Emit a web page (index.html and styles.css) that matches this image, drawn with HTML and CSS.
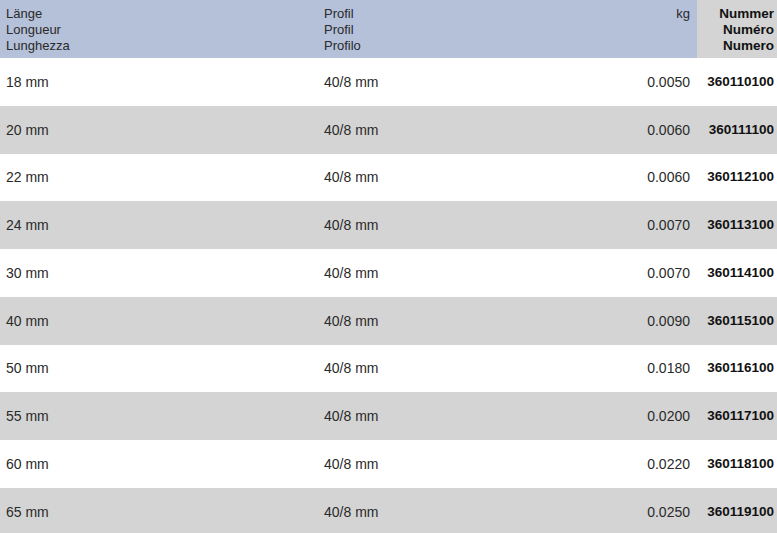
FILE: index.html
```html
<!DOCTYPE html>
<html>
<head>
<meta charset="utf-8">
<link rel="stylesheet" href="styles.css">
</head>
<body>
<div class="table">
  <div class="row head">
    <div class="cell c1">Länge<br>Longueur<br>Lunghezza</div>
    <div class="cell c2">Profil<br>Profil<br>Profilo</div>
    <div class="cell c3">kg</div>
    <div class="cell c4">Nummer<br>Numéro<br>Numero</div>
  </div>
  <div class="row"><div class="cell c1">18 mm</div><div class="cell c2">40/8 mm</div><div class="cell c3">0.0050</div><div class="cell c4">360110100</div></div>
  <div class="row alt"><div class="cell c1">20 mm</div><div class="cell c2">40/8 mm</div><div class="cell c3">0.0060</div><div class="cell c4">360111100</div></div>
  <div class="row"><div class="cell c1">22 mm</div><div class="cell c2">40/8 mm</div><div class="cell c3">0.0060</div><div class="cell c4">360112100</div></div>
  <div class="row alt"><div class="cell c1">24 mm</div><div class="cell c2">40/8 mm</div><div class="cell c3">0.0070</div><div class="cell c4">360113100</div></div>
  <div class="row"><div class="cell c1">30 mm</div><div class="cell c2">40/8 mm</div><div class="cell c3">0.0070</div><div class="cell c4">360114100</div></div>
  <div class="row alt"><div class="cell c1">40 mm</div><div class="cell c2">40/8 mm</div><div class="cell c3">0.0090</div><div class="cell c4">360115100</div></div>
  <div class="row"><div class="cell c1">50 mm</div><div class="cell c2">40/8 mm</div><div class="cell c3">0.0180</div><div class="cell c4">360116100</div></div>
  <div class="row alt"><div class="cell c1">55 mm</div><div class="cell c2">40/8 mm</div><div class="cell c3">0.0200</div><div class="cell c4">360117100</div></div>
  <div class="row"><div class="cell c1">60 mm</div><div class="cell c2">40/8 mm</div><div class="cell c3">0.0220</div><div class="cell c4">360118100</div></div>
  <div class="row alt"><div class="cell c1">65 mm</div><div class="cell c2">40/8 mm</div><div class="cell c3">0.0250</div><div class="cell c4">360119100</div></div>
</div>
</body>
</html>
```
FILE: styles.css
```css
html, body {
  margin: 0;
  padding: 0;
  background: #ffffff;
}
body {
  font-family: "Liberation Sans", Arial, sans-serif;
  font-size: 14px;
  color: #2a2a2a;
}
.table {
  display: flex;
  flex-direction: column;
}
.row {
  display: grid;
  grid-template-columns: 318px 1fr 137px 80px;
  height: 47.75px;
  background: #ffffff;
}
.row.alt {
  background: #d4d4d4;
}
.row.head {
  height: 58px;
  background: #b5c0d9;
  font-size: 13px;
}
.cell {
  display: flex;
  align-items: center;
  padding: 0 6px;
  line-height: 16px;
}
.head .cell {
  align-items: flex-start;
  padding-top: 6px;
}
.c3 {
  justify-content: flex-end;
  text-align: right;
  padding-right: 7px;
}
.c4 {
  justify-content: flex-end;
  text-align: right;
  padding-right: 3px;
  font-weight: bold;
  font-size: 13.5px;
  color: #111111;
}
.head .c4 {
  background: #d4d4d4;
  font-size: 13.5px;
}
```
